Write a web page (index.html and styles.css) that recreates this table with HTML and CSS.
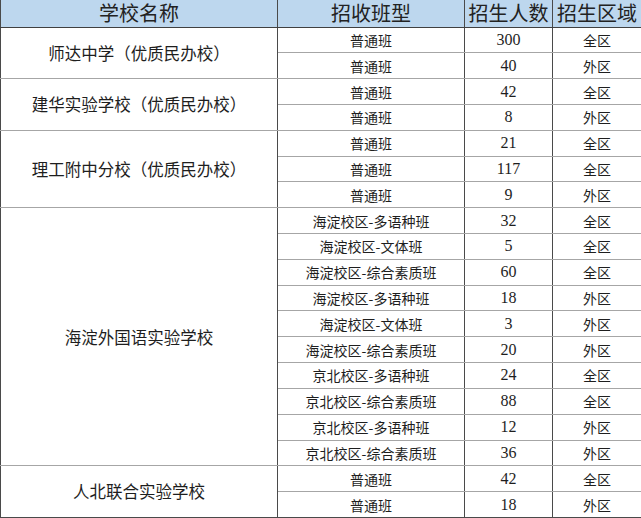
FILE: index.html
```html
<!DOCTYPE html>
<html lang="zh">
<head>
<meta charset="utf-8">
<link rel="stylesheet" href="styles.css">
</head>
<body>
<table class="enroll">
  <colgroup>
    <col class="c-school"><col class="c-type"><col class="c-num"><col class="c-area">
  </colgroup>
  <thead>
    <tr class="head">
      <th>学校名称</th><th>招收班型</th><th>招生人数</th><th>招生区域</th>
    </tr>
  </thead>
  <tbody class="grp">
    <tr><td class="school" rowspan="2">师达中学（优质民办校）</td><td>普通班</td><td class="num">300</td><td>全区</td></tr>
    <tr><td>普通班</td><td class="num">40</td><td>外区</td></tr>
  </tbody>
  <tbody class="grp">
    <tr><td class="school" rowspan="2">建华实验学校（优质民办校）</td><td>普通班</td><td class="num">42</td><td>全区</td></tr>
    <tr><td>普通班</td><td class="num">8</td><td>外区</td></tr>
  </tbody>
  <tbody class="grp">
    <tr><td class="school" rowspan="3">理工附中分校（优质民办校）</td><td>普通班</td><td class="num">21</td><td>全区</td></tr>
    <tr><td>普通班</td><td class="num">117</td><td>全区</td></tr>
    <tr><td>普通班</td><td class="num">9</td><td>外区</td></tr>
  </tbody>
  <tbody class="grp">
    <tr><td class="school" rowspan="10">海淀外国语实验学校</td><td>海淀校区-多语种班</td><td class="num">32</td><td>全区</td></tr>
    <tr><td>海淀校区-文体班</td><td class="num">5</td><td>全区</td></tr>
    <tr><td>海淀校区-综合素质班</td><td class="num">60</td><td>全区</td></tr>
    <tr><td>海淀校区-多语种班</td><td class="num">18</td><td>外区</td></tr>
    <tr><td>海淀校区-文体班</td><td class="num">3</td><td>外区</td></tr>
    <tr><td>海淀校区-综合素质班</td><td class="num">20</td><td>外区</td></tr>
    <tr><td>京北校区-多语种班</td><td class="num">24</td><td>全区</td></tr>
    <tr><td>京北校区-综合素质班</td><td class="num">88</td><td>全区</td></tr>
    <tr><td>京北校区-多语种班</td><td class="num">12</td><td>外区</td></tr>
    <tr><td>京北校区-综合素质班</td><td class="num">36</td><td>外区</td></tr>
  </tbody>
  <tbody class="grp last">
    <tr><td class="school" rowspan="2">人北联合实验学校</td><td>普通班</td><td class="num">42</td><td>全区</td></tr>
    <tr><td>普通班</td><td class="num">18</td><td>外区</td></tr>
  </tbody>
</table>
</body>
</html>
```

FILE: styles.css
```css
html, body {
  margin: 0;
  padding: 0;
  background: #ffffff;
}

.enroll {
  width: 641px;
  height: 518px;
  border-collapse: collapse;
  table-layout: fixed;
  font-family: "Noto Sans CJK SC", "Liberation Serif", serif;
  color: #1e1e1e;
}

.c-school { width: 277px; }
.c-type { width: 187px; }
.c-num { width: 88px; }
.c-area { width: 89px; }

.enroll th,
.enroll td {
  padding: 0;
  text-align: center;
  vertical-align: middle;
  border-left: 1px solid #4a4a4a;
  border-right: 1px solid #4a4a4a;
  border-top: 1px solid #a6a6a6;
  border-bottom: 1px solid #a6a6a6;
  white-space: nowrap;
}

.head {
  height: 27px;
  background: #bdd7ee;
}

.head th {
  font-weight: normal;
  font-size: 20px;
  line-height: 26px;
  border-top: none;
  border-bottom: 1px solid #404040;
  color: #222;
}

.enroll td {
  font-size: 14px;
  line-height: 1;
  height: 24.8px;
}

.enroll td.num {
  font-family: "Liberation Serif", "Noto Sans CJK SC", serif;
  font-size: 16px;
}

.enroll td.school {
  font-size: 16.5px;
}

.grp.last tr:last-child td,
.grp.last td.school {
  border-bottom: 1px solid #4a4a4a;
}
```
